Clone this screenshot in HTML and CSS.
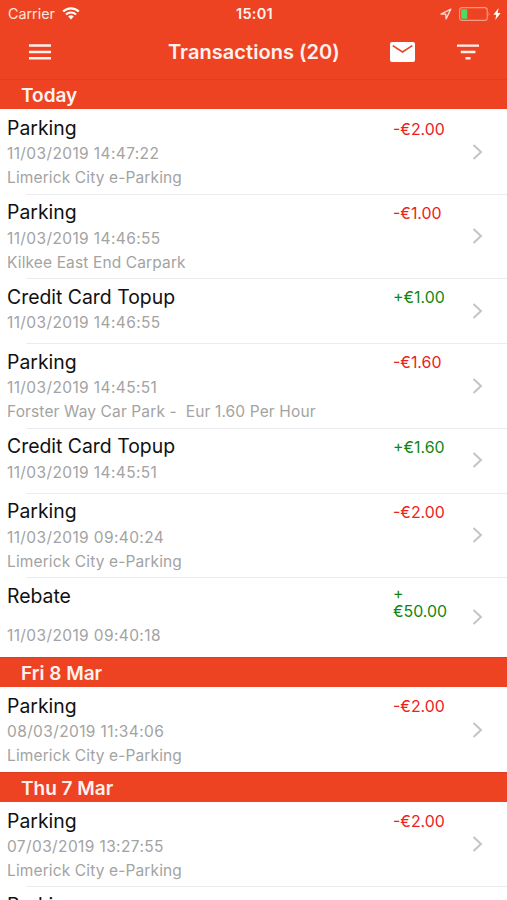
FILE: index.html
```html
<!DOCTYPE html>
<html lang="en">
<head>
    <meta charset="UTF-8">
    <meta name="viewport" content="width=device-width, initial-scale=1.0">
    <title>Transactions</title>
    <link rel="stylesheet" href="styles.css">
</head>
<body>

    <header class="header">
        <div class="status-bar">
            <div class="status-left">
                <span class="carrier">Carrier</span>
                <svg class="wifi" viewBox="0 0 18 13" width="18" height="13">
                    <path d="M1.2 4.6a11 11 0 0 1 15.6 0M4 7.6a7 7 0 0 1 10 0" fill="none" stroke="#fff" stroke-width="2.1"/>
                    <path d="M9 12.4L6.2 9.6a4 4 0 0 1 5.6 0z" fill="#fff"/>
                </svg>
            </div>
            <span class="time">15:01</span>
            <div class="status-right">
                <svg class="location" viewBox="0 0 12 12" width="12" height="12">
                    <path d="M1 6.1L10.8 1.1L6.1 10.9L5.8 6.2z" fill="none" stroke="#ffd9d0" stroke-width="1.3" stroke-linejoin="round"/>
                </svg>
                <svg class="battery" viewBox="0 0 32 14" width="32" height="14">
                    <rect x=".6" y=".6" width="27.6" height="12.8" rx="2.5" fill="none" stroke="#f79a86" stroke-width="1.1"/>
                    <rect x="2.2" y="2.2" width="6" height="9.6" rx="1" fill="#4cd964"/>
                    <path d="M29.6 4.8q1.8 2.2 0 4.4z" fill="#f79a86"/>
                </svg>
                <svg class="bolt" viewBox="0 0 8 12" width="8" height="12">
                    <path d="M5.6 0L.4 6.8h2.9L2.3 12L7.6 4.9H4.6z" fill="#fff"/>
                </svg>
            </div>
        </div>
        <div class="nav-bar">
            <svg class="menu-icon" viewBox="0 0 22 16" width="22" height="16">
                <path d="M0 1.5h22M0 8h22M0 14.2h22" stroke="#fff2ee" stroke-width="2.4"/>
            </svg>
            <h1 class="nav-title">Transactions (20)</h1>
            <svg class="mail-icon" viewBox="0 0 25 20" width="25" height="20">
                <rect width="25" height="20" rx="2" fill="#fff"/>
                <path d="M2.7 3.6L12.5 10L22.3 3.6" fill="none" stroke="#ee4323" stroke-width="1.7"/>
            </svg>
            <svg class="filter-icon" viewBox="0 0 22 16" width="22" height="16">
                <path d="M0 1.6h22M3.8 8h14.6M8.5 14.2h5" stroke="#fff2ee" stroke-width="2.4"/>
            </svg>
        </div>
    </header>

    <main class="list">
        <h2 class="section first">Today</h2>
        <div class="row">
            <div class="info">
                <p class="name">Parking</p>
                <p class="meta date">11/03/2019 14:47:22</p>
                <p class="meta">Limerick City e-Parking</p>
            </div>
            <span class="amount debit">-€2.00</span>
            <svg class="chevron" viewBox="0 0 11 16" width="11" height="16"><path d="M1.5 1l7.5 7l-7.5 7"/></svg>
        </div>
        <div class="row">
            <div class="info">
                <p class="name">Parking</p>
                <p class="meta date">11/03/2019 14:46:55</p>
                <p class="meta">Kilkee East End Carpark</p>
            </div>
            <span class="amount debit">-€1.00</span>
            <svg class="chevron" viewBox="0 0 11 16" width="11" height="16"><path d="M1.5 1l7.5 7l-7.5 7"/></svg>
        </div>
        <div class="row short">
            <div class="info">
                <p class="name">Credit Card Topup</p>
                <p class="meta date">11/03/2019 14:46:55</p>
            </div>
            <span class="amount credit">+€1.00</span>
            <svg class="chevron" viewBox="0 0 11 16" width="11" height="16"><path d="M1.5 1l7.5 7l-7.5 7"/></svg>
        </div>
        <div class="row">
            <div class="info">
                <p class="name">Parking</p>
                <p class="meta date">11/03/2019 14:45:51</p>
                <p class="meta">Forster Way Car Park -&nbsp; Eur 1.60 Per Hour</p>
            </div>
            <span class="amount debit">-€1.60</span>
            <svg class="chevron" viewBox="0 0 11 16" width="11" height="16"><path d="M1.5 1l7.5 7l-7.5 7"/></svg>
        </div>
        <div class="row short">
            <div class="info">
                <p class="name">Credit Card Topup</p>
                <p class="meta date">11/03/2019 14:45:51</p>
            </div>
            <span class="amount credit">+€1.60</span>
            <svg class="chevron" viewBox="0 0 11 16" width="11" height="16"><path d="M1.5 1l7.5 7l-7.5 7"/></svg>
        </div>
        <div class="row">
            <div class="info">
                <p class="name">Parking</p>
                <p class="meta date">11/03/2019 09:40:24</p>
                <p class="meta">Limerick City e-Parking</p>
            </div>
            <span class="amount debit">-€2.00</span>
            <svg class="chevron" viewBox="0 0 11 16" width="11" height="16"><path d="M1.5 1l7.5 7l-7.5 7"/></svg>
        </div>
        <div class="row wrapped">
            <div class="info">
                <p class="name">Rebate</p>
                <p class="meta date">11/03/2019 09:40:18</p>
            </div>
            <span class="amount credit">+<br>€50.00</span>
            <svg class="chevron" viewBox="0 0 11 16" width="11" height="16"><path d="M1.5 1l7.5 7l-7.5 7"/></svg>
        </div>

        <h2 class="section">Fri 8 Mar</h2>
        <div class="row">
            <div class="info">
                <p class="name">Parking</p>
                <p class="meta date">08/03/2019 11:34:06</p>
                <p class="meta">Limerick City e-Parking</p>
            </div>
            <span class="amount debit">-€2.00</span>
            <svg class="chevron" viewBox="0 0 11 16" width="11" height="16"><path d="M1.5 1l7.5 7l-7.5 7"/></svg>
        </div>

        <h2 class="section">Thu 7 Mar</h2>
        <div class="row">
            <div class="info">
                <p class="name">Parking</p>
                <p class="meta date">07/03/2019 13:27:55</p>
                <p class="meta">Limerick City e-Parking</p>
            </div>
            <span class="amount debit">-€2.00</span>
            <svg class="chevron" viewBox="0 0 11 16" width="11" height="16"><path d="M1.5 1l7.5 7l-7.5 7"/></svg>
        </div>
        <div class="row">
            <div class="info">
                <p class="name">Parking</p>
            </div>
        </div>
    </main>

</body>
</html>
```
FILE: styles.css
```css
* {
    box-sizing: border-box;
    margin: 0;
    padding: 0;
}
body {
    font-family: Inter, "Liberation Sans", sans-serif;
    background-color: #fff;
    color: #111;
    height: 900px;
    overflow: hidden;
}
svg {
    display: block;
    flex-shrink: 0;
}
.header {
    height: 79px;
    background-color: #ee4323;
    color: #fff;
}
.status-bar {
    display: grid;
    grid-template-columns: 1fr auto 1fr;
    align-items: center;
    height: 27px;
    padding: 0 6px 0 8px;
    font-size: 14.3px;
}
.status-left, .status-right {
    display: flex;
    align-items: center;
}
.status-left {
    gap: 7px;
}
.carrier {
    color: #ffe3dc;
}
.time {
    font-weight: 600;
    font-size: 14.5px;
    letter-spacing: 0.3px;
    color: #fff2ee;
}
.status-right {
    justify-content: flex-end;
}
.location {
    margin-right: 7px;
}
.bolt {
    margin-left: 2px;
}
.nav-bar {
    display: flex;
    align-items: center;
    height: 50px;
    padding: 0 28px 0 29px;
}
.nav-title {
    flex: 1;
    padding-left: 117px;
    font-size: 20px;
    font-weight: 600;
    letter-spacing: 0.05px;
    color: #fff2ee;
    white-space: nowrap;
}
.filter-icon {
    margin-left: 42px;
}
.section {
    height: 30.3px;
    padding-left: 21px;
    border-top: 1px solid #df3f21;
    background-color: #ee4323;
    color: #fff2ee;
    font-size: 19px;
    font-weight: 600;
    line-height: 32.5px;
}
.row {
    display: flex;
    height: 84.4px;
    padding: 5.7px 24px 0 7px;
}
.row + .row {
    background: linear-gradient(#ececee, #ececee) 26px 0 / 100% 1px no-repeat;
}
.row.short {
    height: 65.1px;
}
.row.wrapped {
    height: 79.8px;
}
.info {
    width: 386px;
}
.name {
    font-size: 19.4px;
    line-height: 26px;
}
.meta {
    font-size: 15.5px;
    line-height: 24.2px;
    letter-spacing: 0.13px;
    color: #a3a3a3;
}
.date {
    letter-spacing: 0.38px;
    padding-top: 1.4px;
    margin-bottom: -0.4px;
}
.wrapped .name {
    margin-bottom: 14.2px;
}
.amount {
    width: 79px;
    padding-top: 5.6px;
    font-size: 15.9px;
    line-height: 18px;
}
.wrapped .amount {
    padding-top: 2.5px;
}
.debit {
    color: #ee2020;
}
.credit {
    color: #0f870f;
}
.chevron {
    align-self: center;
    margin-top: -5px;
}
.chevron path {
    fill: none;
    stroke: #c4c4c6;
    stroke-width: 2;
}
```
